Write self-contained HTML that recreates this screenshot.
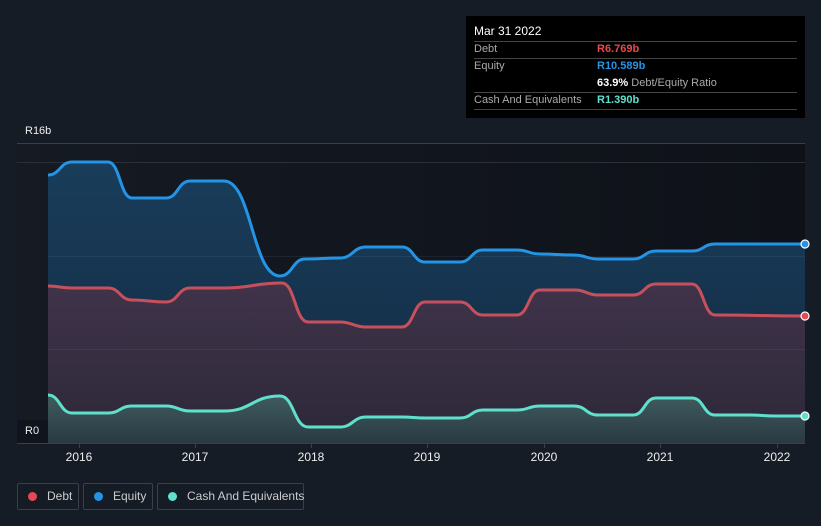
<!DOCTYPE html>
<html><head><meta charset="utf-8"><style>
body{margin:0;width:821px;height:526px;background:#161c26;font-family:"Liberation Sans",sans-serif;overflow:hidden;position:relative}
.tt{position:absolute;left:466px;top:16px;width:339px;height:102px;background:#000}
.t{position:absolute;font-size:11px;color:#aaa;white-space:nowrap}
.ln{position:absolute;left:8px;width:323px;height:1px;background:#444}
.lg{position:absolute;top:483px;height:27px;border:1px solid #3a404b;border-radius:2px;box-sizing:border-box;font-size:12px;color:#ccc;line-height:25px;white-space:nowrap}
.lg i{display:inline-block;width:9px;height:9px;border-radius:50%;margin:0 10px 0 10px;vertical-align:-1px}
.ax{position:absolute;top:450px;font-size:12px;color:#eee;width:40px;text-align:center}
</style></head><body>
<svg width="821" height="526" style="position:absolute;left:0;top:0">
<defs>
<linearGradient id="bg" x1="0" x2="1" y1="0" y2="0"><stop offset="0" stop-color="#151a23"/><stop offset="1" stop-color="#0e1118"/></linearGradient>
<linearGradient id="dg" x1="0" x2="0" y1="0" y2="1"><stop offset="0" stop-color="#40334a"/><stop offset="1" stop-color="#2c2838"/></linearGradient>
<linearGradient id="cg" x1="0" x2="0" y1="0" y2="1"><stop offset="0" stop-color="#3f5c5f"/><stop offset="1" stop-color="#2a3942"/></linearGradient>
<linearGradient id="eg" x1="0" x2="0" y1="0" y2="1"><stop offset="0" stop-color="#193d5a"/><stop offset="1" stop-color="#132a42"/></linearGradient>
</defs>
<rect x="17" y="143" width="788" height="300" fill="url(#bg)"/>
<rect x="17" y="420" width="31" height="23" fill="#10141c"/>
<line x1="17" y1="143.5" x2="805" y2="143.5" stroke="#3a3f48"/>
<g id="g"></g>
<line x1="17" y1="443.5" x2="805" y2="443.5" stroke="#3a3f48"/>
</svg>
<div class="t" style="left:25px;top:125px;color:#eee">R16b</div>
<div class="t" style="left:25px;top:425px;color:#eee">R0</div>
<div class="ax" style="left:59px">2016</div><div class="ax" style="left:175px">2017</div><div class="ax" style="left:291px">2018</div><div class="ax" style="left:407px">2019</div><div class="ax" style="left:524px">2020</div><div class="ax" style="left:640px">2021</div><div class="ax" style="left:757px">2022</div>
<div class="tt">
<div class="t" style="left:8px;top:8px;color:#fff;font-size:12px">Mar 31 2022</div>
<div class="ln" style="top:25px"></div>
<div class="t" style="left:8px;top:27px">Debt</div><div class="t" style="left:131px;top:27px;color:#e8484f;font-weight:bold">R6.769b</div>
<div class="ln" style="top:42px"></div>
<div class="t" style="left:8px;top:44px">Equity</div><div class="t" style="left:131px;top:44px;color:#2394e6;font-weight:bold">R10.589b</div>
<div class="t" style="left:131px;top:61px"><b style="color:#fff">63.9%</b> Debt/Equity Ratio</div>
<div class="ln" style="top:76px"></div>
<div class="t" style="left:8px;top:78px">Cash And Equivalents</div><div class="t" style="left:131px;top:78px;color:#5fe0cc;font-weight:bold">R1.390b</div>
<div class="ln" style="top:93px"></div>
</div>
<div class="lg" style="left:17px;width:62px"><i style="background:#e8484f"></i>Debt</div>
<div class="lg" style="left:83px;width:70px"><i style="background:#2394e6"></i>Equity</div>
<div class="lg" style="left:157px;width:147px"><i style="background:#5fe0cc"></i>Cash And Equivalents</div>
<script>
function P(a){let d="M"+a[0][0]+","+a[0][1];for(let i=1;i<a.length;i++){let p=a[i-1],q=a[i],m=(p[0]+q[0])/2;d+=" C"+m+","+p[1]+" "+m+","+q[1]+" "+q[0]+","+q[1];}return d;}
const E=[[48,175],[72,162],[108,162],[132,198],[166,198],[190,181],[224,181],[280,276],[305,259],[340,258],[366,247],[402,247],[425,262],[460,262],[483,250],[517,250],[540,254],[574,255],[598,259],[633,259],[656,251],[692,251],[715,244],[805,244]];
const D=[[48,286],[72,288],[108,288],[132,300],[166,302],[190,288],[224,288],[282,283],[308,322],[340,322],[366,327],[402,327],[425,302],[460,302],[483,315],[517,315],[540,290],[575,290],[598,295],[633,295],[656,284],[692,284],[715,315],[805,316]];
const C=[[48,395],[72,413],[108,413],[132,406],[166,406],[190,411],[224,411],[280,396],[308,427],[340,427],[366,417],[402,417],[425,418],[460,418],[483,410],[517,410],[540,406],[574,406],[598,415],[633,415],[656,398],[692,398],[715,415],[750,415],[775,416],[805,416]];
let s="";
const area=(a,f)=>'<path d="'+P(a)+' L805,443 L48,443 Z" fill="'+f+'"/>';
s+=area(E,"url(#eg)")+area(D,"url(#dg)")+area(C,"url(#cg)");
s+='<line x1="17" y1="162.5" x2="805" y2="162.5" stroke="#2a2f38"/><line x1="48" y1="256.5" x2="805" y2="256.5" stroke="rgba(255,255,255,0.06)"/><line x1="48" y1="349.5" x2="805" y2="349.5" stroke="rgba(255,255,255,0.06)"/>';
const ln=(a,c)=>'<path d="'+P(a)+'" fill="none" stroke="'+c+'" stroke-width="3"/>';
s+=ln(E,"#2394e6")+ln(D,"#c8505c")+ln(C,"#5fe0cc");
s+='<circle cx="805" cy="244" r="4" fill="#2394e6" stroke="#fff" stroke-width="1.2"/><circle cx="805" cy="316" r="4" fill="#e8484f" stroke="#fff" stroke-width="1.2"/><circle cx="805" cy="416" r="4" fill="#5fe0cc" stroke="#fff" stroke-width="1.2"/>';
[79,195,311,427,544,660,777].forEach(x=>s+='<line x1="'+x+'.5" y1="443" x2="'+x+'.5" y2="448" stroke="#3a3f48"/>');
document.getElementById("g").innerHTML=s;
</script>
</body></html>
